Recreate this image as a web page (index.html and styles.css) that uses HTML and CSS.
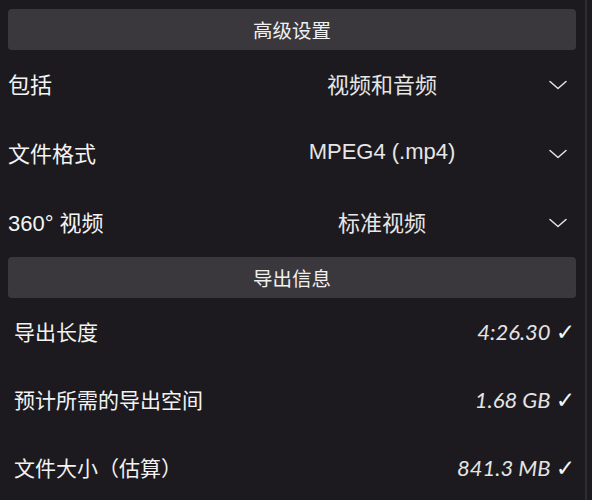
FILE: index.html
```html
<!DOCTYPE html>
<html lang="zh-CN">
<head>
    <meta charset="UTF-8">
    <meta name="viewport" content="width=device-width, initial-scale=1.0">
    <title>导出设置</title>
    <link rel="stylesheet" href="styles.css">
</head>
<body>

    <div class="panel">
        <!-- 高级设置 -->
        <div class="section-bar">高级设置</div>

        <div class="setting-row">
            <span class="setting-label">包括</span>
            <span class="setting-value">视频和音频</span>
            <svg class="chevron" viewBox="0 0 18 10"><path d="M1 1.5 L9 8.5 L17 1.5"/></svg>
        </div>
        <div class="setting-row">
            <span class="setting-label">文件格式</span>
            <span class="setting-value">MPEG4 (.mp4)</span>
            <svg class="chevron" viewBox="0 0 18 10"><path d="M1 1.5 L9 8.5 L17 1.5"/></svg>
        </div>
        <div class="setting-row">
            <span class="setting-label">360° 视频</span>
            <span class="setting-value">标准视频</span>
            <svg class="chevron" viewBox="0 0 18 10"><path d="M1 1.5 L9 8.5 L17 1.5"/></svg>
        </div>

        <!-- 导出信息 -->
        <div class="section-bar">导出信息</div>

        <div class="info-row">
            <span class="info-label">导出长度</span>
            <span class="info-value">4:26.30 <span class="check">✓</span></span>
        </div>
        <div class="info-row">
            <span class="info-label">预计所需的导出空间</span>
            <span class="info-value">1.68 GB <span class="check">✓</span></span>
        </div>
        <div class="info-row">
            <span class="info-label">文件大小（估算）</span>
            <span class="info-value">841.3 MB <span class="check">✓</span></span>
        </div>
    </div>

</body>
</html>
```

FILE: styles.css
```css
/* Page */
body {
    margin: 0;
    background-color: #1c1a1e;
    color: #f2f2f2;
    font-family: "Liberation Sans", "Noto Sans CJK SC", sans-serif;
    overflow: hidden;
}

/* Panel with thin divider on the right edge */
.panel {
    width: 568px;
    height: 500px;
    padding: 9px 9px 0 8px;
    border-right: 2px solid #2f2d32;
}

/* Grey section headers */
.section-bar {
    height: 41px;
    display: flex;
    justify-content: center;
    align-items: center;
    background-color: #3a383c;
    border-radius: 4px;
    font-family: "Noto Sans CJK SC", sans-serif;
    font-size: 19.5px;
    color: #f0f0f0;
}

/* Dropdown rows */
.setting-row {
    height: 69px;
    display: grid;
    grid-template-columns: 206px 336px 26px;
    align-items: center;
    font-size: 22px;
}

.setting-label {
    color: #f4f4f4;
    margin-bottom: 4px;
}

.setting-value {
    text-align: center;
    color: #e6e6e6;
    margin-bottom: 4px;
}

.chevron {
    width: 18px;
    height: 10px;
    justify-self: end;
    margin-right: 9px;
    fill: none;
    stroke: #e4e4e4;
    stroke-width: 1.5;
    stroke-linecap: round;
    stroke-linejoin: round;
}

/* Export info rows */
.info-row {
    height: 68px;
    display: flex;
    justify-content: space-between;
    align-items: center;
    padding: 0 1px 0 6px;
    font-size: 21px;
}

.info-label {
    color: #f2f2f2;
    margin-bottom: 2px;
}

.info-value {
    font-family: "Lato", "Liberation Sans", sans-serif;
    font-style: italic;
    font-size: 22px;
    color: #e4e4e4;
    margin-bottom: 2px;
}

.check {
    font-family: "DejaVu Sans", sans-serif;
    font-style: normal;
    font-weight: bold;
    font-size: 23px;
    color: #f6f6f6;
}
```
